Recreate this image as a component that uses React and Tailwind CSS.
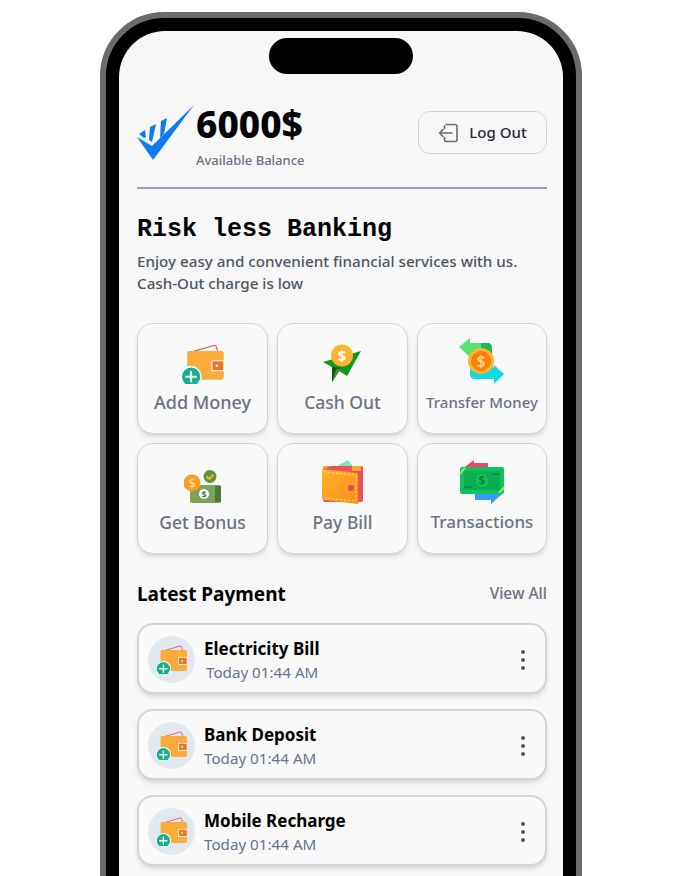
const sans = { fontFamily: '"Noto Sans", "Open Sans", sans-serif' }

function Logo() {
  return (
    <svg width="58" height="56" viewBox="0 0 58 56" className="shrink-0">
      <path d="M57 0 L16 55 L0 32 L15 41 Z" fill="#0d7bf5" />
      <path d="M2 29 L8 25 L9 32 L7 33 Z M13 22 L19 19 L15 37 L12 35 Z M24 16 L30 13 L27 29 L23 33 Z" fill="#0d7bf5" />
    </svg>
  )
}

function LogoutIcon() {
  return (
    <svg width="21" height="20" viewBox="0 0 21 20" fill="none" stroke="#6b6b6b" strokeWidth="1.6" strokeLinecap="round" strokeLinejoin="round">
      <path d="M8 1.500h9a2 2 0 0 1 2 2v13a2 2 0 0 1-2 2H8a1.500 1.500 0 0 1-1.500-1.500V14.500M6.500 5.500V3" />
      <path d="M14 10H1.500M5 6.500 1.500 10 5 13.500" />
    </svg>
  )
}

function WalletIcon({ size = 44 }) {
  return (
    <svg width={size} height={size * 0.9} viewBox="0 0 44 40">
      <path d="M7 9 L33 1.500 Q35 1 35.500 3 L37 8" fill="none" stroke="#ef5350" strokeWidth="1.200" />
      <rect x="6" y="7" width="37" height="29" rx="2.500" fill="#fbab3c" />
      <rect x="31" y="17" width="12" height="10" fill="#e8792b" stroke="#ffffff" strokeWidth="1" />
      <circle cx="36" cy="22" r="1.200" fill="#ffffff" />
      <circle cx="10" cy="33" r="10" fill="#14b08f" stroke="#ffffff" strokeWidth="1.500" />
      <path d="M5 33h10M10 28v10" stroke="#ffffff" strokeWidth="2" strokeLinecap="round" />
    </svg>
  )
}

function CashOutIcon() {
  return (
    <svg width="40" height="40" viewBox="0 0 40 40">
      <path d="M38 7 L24 32 L16 27 L9 38 L9 23 L0 18 Z" fill="#0f9a18" />
      <path d="M9 23 L21 24 L16 27 L9 38 Z" fill="#0b5d16" />
      <path d="M21 24 L16 27 L9 38 L13 25 Z" fill="#3f8f3f" />
      <circle cx="19" cy="11.500" r="11" fill="#fdb52f" />
      <text x="19" y="17" textAnchor="middle" fontSize="15" fontWeight="700" fill="#ffffff" style={sans}>$</text>
    </svg>
  )
}

function TransferIcon() {
  return (
    <svg width="46" height="46" viewBox="0 0 46 46">
      <path d="M11 0 L11 5 L28 5 Q33 5 33 10 L33 22 L12 22 Q11 16 11 15 L11 19 L0 9 Z" fill="#55e46c" />
      <path d="M22 5 L28 5 Q33 5 33 10 L33 22 L22 22 Z" fill="#20b858" />
      <path d="M35 46 L35 41 L16 41 Q11 41 11 36 L11 24 L33 24 L35 31 L35 27 L45 36 Z" fill="#0fdbe6" />
      <circle cx="22" cy="23" r="13" fill="#fdb52f" />
      <circle cx="22" cy="23" r="10" fill="#f97d0b" />
      <text x="22" y="29" textAnchor="middle" fontSize="16" fontWeight="700" fill="#ffd27a" style={sans}>$</text>
    </svg>
  )
}

function BonusIcon() {
  return (
    <svg width="38" height="34" viewBox="0 0 38 34">
      <rect x="6" y="15" width="31" height="18" rx="2" fill="#7ba35a" />
      <path d="M31 16h6v16h-6z" fill="#4e7a3c" />
      <circle cx="20" cy="24" r="5" fill="#ffffff" />
      <text x="20" y="27.500" textAnchor="middle" fontSize="9" fontWeight="700" fill="#3f7a3c" style={sans}>$</text>
      <circle cx="8" cy="13" r="8.500" fill="#fb9a1c" />
      <text x="8" y="18" textAnchor="middle" fontSize="13" fill="#ffe0a8" style={sans}>$</text>
      <circle cx="26" cy="6.500" r="6.500" fill="#62923f" />
      <path d="M22.500 6.500 L25.500 9 L29.500 4.500" fill="none" stroke="#fbc02d" strokeWidth="1.800" />
    </svg>
  )
}

function PayBillIcon() {
  return (
    <svg width="42" height="44" viewBox="0 0 42 44">
      <defs>
        <linearGradient id="billBody" x1="0" y1="0" x2="1" y2="1">
          <stop offset="0" stopColor="#ffb52a" />
          <stop offset="1" stopColor="#f98a1c" />
        </linearGradient>
      </defs>
      <path d="M12 8 L26 0 L36 12 L20 14 Z" fill="#7ee8b4" />
      <rect x="1" y="6" width="40" height="36" rx="2" fill="#ef4f5b" />
      <path d="M1 6h9l-9 3zM30 6h9v5h-9z" fill="#f9a825" />
      <path d="M0 9 L36 13 L36 44 L2 40 Q0 40 0 38 Z" fill="url(#billBody)" />
      <path d="M2 12 L34 15 L34 41 L3 38" fill="none" stroke="#ffe65c" strokeWidth="1" strokeDasharray="2.500 1.500" />
      <circle cx="29" cy="28" r="3" fill="#e34a5a" />
    </svg>
  )
}

function TransactionsIcon() {
  return (
    <svg width="46" height="44" viewBox="0 0 46 44">
      <path d="M15 0 L15 3 L29 3 L29 9 L3 9 Z" fill="#f4436f" />
      <path d="M32 44 L32 40 L16 40 L16 34 L43 34 Z" fill="#3b9cf5" />
      <rect x="1" y="7" width="44" height="27" rx="2" fill="#10c45c" />
      <rect x="5" y="11" width="36" height="19" fill="#0cae52" />
      <circle cx="23" cy="20.500" r="7" fill="#10c45c" stroke="#0a8f44" strokeDasharray="1.500 1.500" />
      <text x="23" y="25" textAnchor="middle" fontSize="12" fontWeight="700" fill="#0a7f3c" style={sans}>$</text>
      <path d="M5 27h8M33 14h8" stroke="#0a8f44" strokeWidth="1.500" />
      <path d="M1 12 L5 8 L7 8 L1 15Z M45 29 L41 33 L39 33 L45 26Z" fill="#9cf07a" />
    </svg>
  )
}

const actions = [
  { label: 'Add Money', icon: <WalletIcon />, cls: 'text-[18px]' },
  { label: 'Cash Out', icon: <CashOutIcon />, cls: 'text-[17.5px]' },
  { label: 'Transfer Money', icon: <TransferIcon />, cls: 'text-[15px]' },
  { label: 'Get Bonus', icon: <BonusIcon />, cls: 'text-[17.5px]' },
  { label: 'Pay Bill', icon: <PayBillIcon />, cls: 'text-[17.5px]' },
  { label: 'Transactions', icon: <TransactionsIcon />, cls: 'text-[17px]' },
]

const payments = [
  { title: 'Electricity Bill', sub: 'ml-[2px]' },
  { title: 'Bank Deposit', sub: '' },
  { title: 'Mobile Recharge', sub: '' },
]

export default function App() {
  return (
    <div className="h-[876px] overflow-hidden bg-white pt-3 pl-[100px]" style={sans}>
      <div className="relative w-[482px] h-[1000px] rounded-[64px] bg-black border-[6px] border-[#6b6b6b] p-[13px]">
        <div className="absolute top-[20px] left-[163px] w-[144px] h-[36px] rounded-full bg-black" />
        <div className="h-full rounded-[46px] bg-[#f7f7f7] pl-[18px] pr-[16px] pt-[74px]">
          <div className="flex items-start justify-between h-[84px] border-b-2 border-[#94a3b8]">
            <div className="flex gap-[1px]">
              <Logo />
              <div>
                <div className="text-[37px] leading-[38px] font-extrabold text-black">6000$</div>
                <div className="mt-[8px] text-[13px] leading-[18px] font-medium text-[#6b7280]">Available Balance</div>
              </div>
            </div>
            <div className="flex items-center justify-center gap-[10px] mt-[6px] w-[129px] h-[43px] rounded-xl border border-[#d1d5db] text-[15px] font-medium text-[#1f2937]">
              <LogoutIcon />
              Log Out
            </div>
          </div>

          <h1 className="mt-[25px] text-[25px] leading-[32px] font-bold text-black" style={{ fontFamily: '"Liberation Mono", monospace' }}>Risk less Banking</h1>
          <p className="mt-[4px] text-[15.2px] leading-[22px] font-medium text-[#4b5563]">
            Enjoy easy and convenient financial services with us.<br />Cash-Out charge is low
          </p>

          <div className="mt-[29px] grid grid-cols-[131px_131px_1fr] gap-[9px]">
            {actions.map((a) => (
              <div key={a.label} className="flex flex-col items-center justify-end h-[111px] pb-[19px] rounded-2xl border border-[#d1d5db] bg-[#f9f9fa] shadow-md">
                {a.icon}
                <div className={`mt-[6px] leading-[24px] font-medium text-[#6b7280] ${a.cls}`}>{a.label}</div>
              </div>
            ))}
          </div>

          <div className="mt-[26px] flex items-center justify-between">
            <h2 className="text-[19px] leading-[28px] font-bold text-black">Latest Payment</h2>
            <span className="text-[15.5px] font-medium text-[#6b7280]">View All</span>
          </div>

          <div className="mt-[15px] flex flex-col gap-[15px]">
            {payments.map((p) => (
              <div key={p.title} className="flex items-center h-[71px] pt-[2px] pl-[9px] pr-[20px] rounded-2xl border-2 border-[#d1d5db] bg-[#f9f9fa] shadow-md">
                <div className="flex items-center justify-center w-[47px] h-[47px] rounded-full bg-[#e2e8f0]">
                  <WalletIcon size={32} />
                </div>
                <div className="ml-[9px] flex-1">
                  <div className="text-[17px] leading-[25px] font-bold text-black">{p.title}</div>
                  <div className={`text-[15.2px] leading-[22px] text-[#64748b] ${p.sub}`}>Today 01:44 AM</div>
                </div>
                <div className="flex flex-col gap-[4px]">
                  <span className="w-[4px] h-[4px] rounded-full bg-[#555555]" />
                  <span className="w-[4px] h-[4px] rounded-full bg-[#555555]" />
                  <span className="w-[4px] h-[4px] rounded-full bg-[#555555]" />
                </div>
              </div>
            ))}
          </div>
        </div>
      </div>
    </div>
  )
}
